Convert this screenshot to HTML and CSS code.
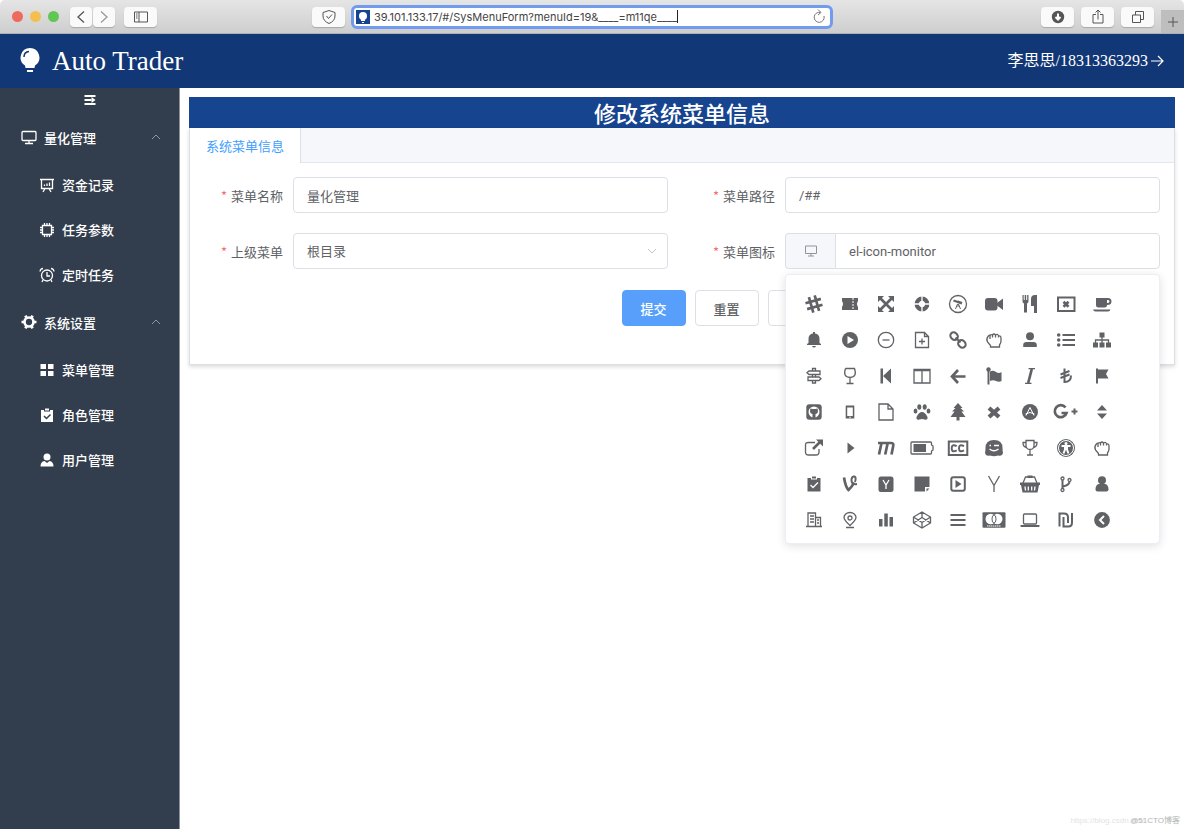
FILE: index.html
```html
<!DOCTYPE html>
<html lang="zh-CN">
<head>
<meta charset="utf-8">
<title>Auto Trader</title>
<meta name="viewport" content="width=device-width, initial-scale=1">
<link rel="stylesheet" href="styles.css">
</head>
<body>
<div class="window">
  <div class="toolbar">
    <div class="tool-left">
      <div class="lights"><span class="light red"></span><span class="light amber"></span><span class="light green"></span></div>
      <div class="nav-pair">
        <button class="tool nav" aria-label="后退"><svg class="ico" viewBox="-12 -12 24 24"><path class="ln w15" d="M3-5.500-3 0 3 5.500"/></svg></button>
        <button class="tool nav dim" aria-label="前进"><svg class="ico" viewBox="-12 -12 24 24"><path class="ln w15" d="M-3-5.500 3 0-3 5.500"/></svg></button>
      </div>
      <button class="tool" aria-label="边栏"><svg class="ico" viewBox="-12 -12 24 24"><path class="ln" d="M-6.500-5h13V5h-13zM-2-5V5M-5-3h1.500M-5-1h1.500M-5 1h1.500"/></svg></button>
    </div>
    <div class="tool-center">
      <button class="tool" aria-label="隐私报告"><svg class="ico" viewBox="-12 -12 24 24"><path class="ln" d="M0-6.500 6-4.500V-1Q6 4 0 6.500-6 4-6-1V-4.500zM-2.500-1-.5 1.500 3-2.500"/></svg></button>
      <div class="address">
        <span class="favicon"><svg class="ico" viewBox="-12 -12 24 24"><circle cy="-1" r="4"/><path d="M-2 2h4v2h-4zM-1 5h2v1h-2z"/></svg></span>
        <input class="address-input" aria-label="地址" value="39.101.133.17/#/SysMenuForm?menuId=19&amp;____=m11qe____">
        <span class="caret"></span>
        <button class="reload" aria-label="重新载入"><svg class="ico" viewBox="-12 -12 24 24"><path class="ln" d="M5-1A5 5 0 1 1 1.500-4.500M-1-7.500 2-4.500-1-2"/></svg></button>
      </div>
    </div>
    <div class="tool-right">
      <button class="tool" aria-label="下载"><svg class="ico" viewBox="-12 -12 24 24"><circle r="6.200"/><path class="cut w2" d="M0-3.500V2M-2.500 0 0 2.500 2.500 0"/></svg></button>
      <button class="tool" aria-label="共享"><svg class="ico" viewBox="-12 -12 24 24"><path class="ln" d="M-2-2.500H-5V6H5V-2.500H2M0 2.500V-7M-2.500-4.500 0-7 2.500-4.500"/></svg></button>
      <button class="tool" aria-label="标签页"><svg class="ico" viewBox="-12 -12 24 24"><path class="ln" d="M-5.500-2h8v7.500h-8zM-2.500-2v-3.500h8V2.500H2.500"/></svg></button>
      <button class="new-tab" aria-label="新标签页"><svg class="ico" viewBox="-12 -12 24 24"><path class="ln" d="M-5 0H5M0-5V5"/></svg></button>
    </div>
  </div>

  <header class="app-header">
    <div class="brand">
      <svg class="bulb" viewBox="0 0 20 26"><path d="M10 0a9.500 9.500 0 0 1 5 17.500L14.500 20h-9L5 17.500A9.500 9.500 0 0 1 10 0zM7 22h6v2h-6z"/><path class="bulb-shine" d="M4 9Q4 4 9 3.500"/></svg>
      <span class="brand-name">Auto Trader</span>
    </div>
    <a class="account" href="#">李思思/18313363293<svg class="account-arrow" viewBox="0 0 14 14"><path d="M1 7h12M8 2l5 5-5 5"/></svg></a>
  </header>

  <div class="body">
    <nav class="sidebar">
      <button class="collapse" aria-label="收起菜单"><svg class="ico" viewBox="-12 -12 24 24"><path class="ln w2" d="M-5.500-4h11M-5.500 0h7M-5.500 4h11"/><path d="M1.500-3 5.500 0 1.500 3z"/></svg></button>
      <button class="group"><svg class="ico" viewBox="-12 -12 24 24"><path class="ln w15" d="M-6-5.500H6Q7-5.500 7-4.500V2.500Q7 3.500 6 3.500H-6Q-7 3.500-7 2.500V-4.500Q-7-5.500-6-5.500M0 3.500V6.500M-4 6.500H4"/></svg>量化管理<svg class="chevron" viewBox="0 0 10 6"><path d="M1 5l4-4 4 4"/></svg></button>
      <a class="item" href="#"><svg class="ico" viewBox="-12 -12 24 24"><path class="ln w15" d="M-7-5.500H7M-5.500-5.500V3.500H5.500V-5.500M-2 3.500-4 7M2 3.500 4 7M-2.500 1V-.5M0 1V-1.500M2.500 1V-2.500"/></svg>资金记录</a>
      <a class="item" href="#"><svg class="ico" viewBox="-12 -12 24 24"><path class="ln w15" d="M-4.500-4.500h9v9h-9zM-2.500-7v2M0-7v2M2.500-7v2M-2.500 5v2M0 5v2M2.500 5v2M-7-2.500h2M-7 0h2M-7 2.500h2M5-2.500h2M5 0h2M5 2.500h2"/></svg>任务参数</a>
      <a class="item" href="#"><svg class="ico" viewBox="-12 -12 24 24"><circle class="ln w15" cy=".5" r="5.500"/><path class="ln w15" d="M0-3V1H3M-4-6.500Q-6.500-6.500-7-3.500M4-6.500Q6.500-6.500 7-3.500M-4 5-5 7M4 5 5 7"/></svg>定时任务</a>
      <button class="group"><svg class="ico" viewBox="-12 -12 24 24"><circle class="ln w3" r="4.500"/><path class="ln w3" d="M5 0H7.500M-5 0H-7.500M2.500-4.300 3.600-6.300M-2.500-4.300-3.600-6.300M2.500 4.300 3.600 6.300M-2.500 4.300-3.600 6.300"/></svg>系统设置<svg class="chevron" viewBox="0 0 10 6"><path d="M1 5l4-4 4 4"/></svg></button>
      <a class="item" href="#"><svg class="ico" viewBox="-12 -12 24 24"><path d="M-6.500-6h5.500v5h-5.500zM1-6h5.500v5h-5.500zM-6.500 1h5.500v5h-5.500zM1 1h5.500v5h-5.500z"/></svg>菜单管理</a>
      <a class="item" href="#"><svg class="ico" viewBox="-12 -12 24 24"><path d="M-6-5h3v1.500h6V-5h3V7H-6zM-2-6.500h4v2h-4z"/><path class="side-cut" d="M-3 1-.5 3.500 3.500-.5"/></svg>角色管理</a>
      <a class="item" href="#"><svg class="ico" viewBox="-12 -12 24 24"><circle cy="-3" r="3.500"/><path d="M-6.500 6.500Q-6.500 1.500-2.500 1L0 3 2.500 1Q6.500 1.500 6.500 6.500z"/></svg>用户管理</a>
    </nav>

    <main class="main">
      <section class="card">
        <h1 class="title">修改系统菜单信息</h1>
        <div class="panel">
          <div class="tabs" role="tablist"><button class="tab" role="tab" aria-selected="true">系统菜单信息</button></div>
          <form class="form">
            <div class="field"><label class="label" for="name">菜单名称</label><input class="input" id="name" value="量化管理"></div>
            <div class="field"><label class="label" for="path">菜单路径</label><input class="input" id="path" value="/##"></div>
            <div class="field"><label class="label" for="parent">上级菜单</label>
              <div class="select-wrap"><select class="input" id="parent"><option>根目录</option></select><svg class="select-arrow" viewBox="0 0 10 6"><path d="M1 1l4 4 4-4"/></svg></div>
            </div>
            <div class="field"><label class="label" for="icon">菜单图标</label>
              <div class="icon-picker">
                <span class="prepend"><svg class="ico" viewBox="-12 -12 24 24"><path class="ln" d="M-5.500-5h11v7.500h-11zM0 2.500V5M-3 5H3"/></svg></span>
                <input class="input joined" id="icon" value="el-icon-monitor">
                <div class="popover">
                  <button type="button" class="pick" aria-label="slack"><svg class="ico" viewBox="-12 -12 24 24"><path class="ln w3" transform="rotate(-16)" d="M-3-8V8M3-8V8M-8-3H8M-8 3H8"/></svg></button>
                  <button type="button" class="pick" aria-label="ticket"><svg class="ico" viewBox="-12 -12 24 24"><path d="M-8-6H8V-3Q6 0 8 3V6H-8V3Q-6 0-8-3z"/><path class="cut dash" d="M3-6V6"/></svg></button>
                  <button type="button" class="pick" aria-label="expand"><svg class="ico" viewBox="-12 -12 24 24"><path class="ln w3" d="M-6-6 6 6M6-6-6 6"/><path d="M-8-8h6l-6 6zM8-8v6l-6-6zM8 8H2l6-6zM-8 8V2l6 6z"/></svg></button>
                  <button type="button" class="pick" aria-label="help"><svg class="ico" viewBox="-12 -12 24 24"><circle class="ln w4" r="5.300"/><path class="cut w15" d="M0-8V8M-8 0H8"/></svg></button>
                  <button type="button" class="pick" aria-label="discover"><svg class="ico" viewBox="-12 -12 24 24"><circle class="ln w15" r="8.500"/><path class="ln w2" d="M-4.500-3.500 0-2"/><path class="ln w3" d="M-.5-2.200 4-.7"/><path class="ln" d="M-.5 0-2.500 5M.5 0 2.500 5M0 0V3"/></svg></button>
                  <button type="button" class="pick" aria-label="video"><svg class="ico" viewBox="-12 -12 24 24"><rect x="-9" y="-6" width="12.500" height="12.500" rx="3"/><path d="M3-1 9-5.500V6L3 1.500z"/></svg></button>
                  <button type="button" class="pick" aria-label="cutlery"><svg class="ico" viewBox="-12 -12 24 24"><path d="M-7.500-9h1.200v5h1V-9h1.500v5h1V-9h1.300V-3Q-1.500-1-3-.5V8.500h-3V-.5Q-7.500-1-7.500-3zM1-5Q1-9 5-9h2V9H4V2H1z"/></svg></button>
                  <button type="button" class="pick" aria-label="window close"><svg class="ico" viewBox="-12 -12 24 24"><rect class="ln w2" x="-8" y="-6.500" width="16.500" height="13.500"/><path class="ln w3" d="M-2.500-2.300 2.500 2.700M2.500-2.300-2.500 2.700"/></svg></button>
                  <button type="button" class="pick" aria-label="cup"><svg class="ico" viewBox="-12 -12 24 24"><path d="M-6-6H5V1Q5 3.500 2.500 3.500H-3.500Q-6 3.500-6 1zM-9 5.500H8.500Q8 7.500 6 7.500H-6.500Q-8.500 7.500-9 5.500z"/><path class="ln w2" d="M5-5H6Q8.500-5 8.500-2.500T5 0"/></svg></button>

                  <button type="button" class="pick" aria-label="bell"><svg class="ico" viewBox="-12 -12 24 24"><path d="M-1-8h2v1.500Q5.500-6 5.500-1V3L7 4V5H-7V4L-5.500 3V-1Q-5.500-6-1-6.500zM-2 6h4Q1.500 7.500 0 7.500T-2 6z"/></svg></button>
                  <button type="button" class="pick" aria-label="play"><svg class="ico" viewBox="-12 -12 24 24"><circle r="8"/><path class="hole" d="M-2.500-4 4 0-2.500 4z"/></svg></button>
                  <button type="button" class="pick" aria-label="remove"><svg class="ico" viewBox="-12 -12 24 24"><circle class="ln w15" r="7.700"/><path class="ln w15" d="M-3.500 0H3.500"/></svg></button>
                  <button type="button" class="pick" aria-label="add document"><svg class="ico" viewBox="-12 -12 24 24"><path class="ln w15" d="M-6.500-7.500H2.500L6.500-3.500V7.500H-6.500zM2.500-7.500V-3.500H6.500"/><path class="ln w15" d="M-3 1.500H3M0-1.500V4.500"/></svg></button>
                  <button type="button" class="pick" aria-label="link"><svg class="ico" viewBox="-12 -12 24 24"><g class="ln w2" transform="rotate(45)"><rect x="-9.500" y="-3.300" width="8" height="6.600" rx="3.300"/><rect x="1.500" y="-3.300" width="8" height="6.600" rx="3.300"/><path d="M-3.500 0h7"/></g></svg></button>
                  <button type="button" class="pick" aria-label="fist"><svg class="ico" viewBox="-12 -12 24 24"><path class="ln w15" d="M-4-4Q-3.500-6-1.500-5Q0-7 1.500-5Q4-6.500 4.500-4Q7-4.500 7-2V1Q7 3 5.500 5V7H-3.500V5.500L-6.500 2Q-8-1-6-3.500T-4-4V-1M-1.500-5V-2.500M1.500-5V-2.500M4.500-4V-2.500"/></svg></button>
                  <button type="button" class="pick" aria-label="user"><svg class="ico" viewBox="-12 -12 24 24"><circle cy="-3.700" r="4"/><path d="M-6.800 7V5Q-6.800 2-3.500 2h7Q6.800 2 6.800 5V7z"/></svg></button>
                  <button type="button" class="pick" aria-label="list"><svg class="ico" viewBox="-12 -12 24 24"><circle cx="-7.300" cy="-5" r="1.800"/><circle cx="-7.300" r="1.800"/><circle cx="-7.300" cy="5" r="1.800"/><path class="ln w2" d="M-3.500-5H9M-3.500 0H9M-3.500 5H9"/></svg></button>
                  <button type="button" class="pick" aria-label="sitemap"><svg class="ico" viewBox="-12 -12 24 24"><path d="M-2.500-7.500h5v5h-5zM-9 2.500h5v5h-5zM-2.500 2.500h5v5h-5zM4 2.500h5v5H4z"/><path class="ln w15" d="M0-3V3M-6.500 3V0h13V3"/></svg></button>

                  <button type="button" class="pick" aria-label="signpost"><svg class="ico" viewBox="-12 -12 24 24"><path class="ln w15" d="M-1.500-5V-7.500h3V-5M-5-5H6V-1.500H-5L-7-3.200zM-1.500-1.500V1M1.500-1.500V1M-6 1H5L7 2.700 5 4.500H-6zM-1.500 4.500V7h3V4.500"/></svg></button>
                  <button type="button" class="pick" aria-label="goblet"><svg class="ico" viewBox="-12 -12 24 24"><path class="ln w15" d="M-4.500-7.500H4.500Q7.500 1 0 1.500-7.500 1-4.500-7.500M0 1.500V7.500M-3.500 7.500H3.500"/></svg></button>
                  <button type="button" class="pick" aria-label="step back"><svg class="ico" viewBox="-12 -12 24 24"><path d="M-5.500-7.500h2.500v15h-2.500zM-3 0 5-7.500v15z"/></svg></button>
                  <button type="button" class="pick" aria-label="columns"><svg class="ico" viewBox="-12 -12 24 24"><path class="ln w15" d="M-8-6.500H8V7H-8zM0-6.500V7M-8-5.500H8"/></svg></button>
                  <button type="button" class="pick" aria-label="left"><svg class="ico" viewBox="-12 -12 24 24"><path class="ln w3" d="M7.500.5H-5M0-6-6 .5 0 7"/></svg></button>
                  <button type="button" class="pick" aria-label="flag"><svg class="ico" viewBox="-12 -12 24 24"><circle cx="-5.500" cy="-6.500" r="2.200"/><path d="M-6.500-6h2V8.500h-2zM-4-4.500Q-1-6 2-4T7.500-4V5Q5 6.500 2 5T-4 5z"/></svg></button>
                  <button type="button" class="pick" aria-label="italic"><svg class="ico" viewBox="-12 -12 24 24"><path class="ln w3" d="M1.800-7-1.800 7"/><path class="ln w15" d="M-1.500-7.300H5M-5 7.300H1.500"/></svg></button>
                  <button type="button" class="pick" aria-label="lira"><svg class="ico" viewBox="-12 -12 24 24"><path class="ln w2" d="M-1.500-7.500V6Q5 6 5-.5M-5.500-1.500 3.500-5M-5.500 2 3.500-1.500"/></svg></button>
                  <button type="button" class="pick" aria-label="banner"><svg class="ico" viewBox="-12 -12 24 24"><path d="M-6-7.500h2v15h-2zM-4-6.500H6.500L4-2 6.500 2.500H-4z"/></svg></button>

                  <button type="button" class="pick" aria-label="github"><svg class="ico" viewBox="-12 -12 24 24"><rect x="-7.700" y="-7.700" width="15.400" height="15.400" rx="3"/><circle class="hole" r="5.500"/><path d="M-3.700-3.500-1.500-3H1.500L3.700-3.500Q4.500 0 3 1.500L1.500 2V6H-1.500V2L-3 1.500Q-4.500 0-3.700-3.500z"/></svg></button>
                  <button type="button" class="pick" aria-label="phone"><svg class="ico" viewBox="-12 -12 24 24"><path d="M-4.300-6.500h8.600v13h-8.600zM-2.800-4.500V4h5.600V-4.500z" fill-rule="evenodd"/><circle class="hole" cy="5.300" r=".7"/></svg></button>
                  <button type="button" class="pick" aria-label="document"><svg class="ico" viewBox="-12 -12 24 24"><path class="ln w15" d="M-7-8H2L7-3V8H-7zM2-8V-3H7"/></svg></button>
                  <button type="button" class="pick" aria-label="paw"><svg class="ico" viewBox="-12 -12 24 24"><ellipse cx="-6.500" cy="-1" rx="1.900" ry="2.600"/><ellipse cx="6.500" cy="-1" rx="1.900" ry="2.600"/><ellipse cx="-2.700" cy="-5" rx="2" ry="2.800"/><ellipse cx="2.700" cy="-5" rx="2" ry="2.800"/><path d="M0 0Q3 0 5.500 5 6 8.500 2.500 7.500 0 6.500-2.500 7.500-6 8.500-5.500 5-3 0 0 0z"/></svg></button>
                  <button type="button" class="pick" aria-label="tree"><svg class="ico" viewBox="-12 -12 24 24"><path d="M0-9 4.500-4H2.500L6-.5H3.500L7.500 5H1.500V8.500h-3V5h-6L-3.500-.5H-6L-2.500-4h-2z"/></svg></button>
                  <button type="button" class="pick" aria-label="close"><svg class="ico" viewBox="-12 -12 24 24"><path class="ln w4" d="M-5-4 5 5M5-4-5 5"/></svg></button>
                  <button type="button" class="pick" aria-label="app"><svg class="ico" viewBox="-12 -12 24 24"><circle r="8"/><path class="cut" d="M-4 3.500 0-4.500 4 3.500M-4.500 2Q0-1 4.500 2"/></svg></button>
                  <button type="button" class="pick" aria-label="google plus"><svg class="ico" viewBox="-12 -12 24 24"><path class="ln w3" d="M-.5-4.500A6 6 0 1 0 .5 1H-4.500"/><path class="ln w2" d="M8.500-3.500V2.500M5.500-.5H11.500"/></svg></button>
                  <button type="button" class="pick" aria-label="sort"><svg class="ico" viewBox="-12 -12 24 24"><path d="M-5-1.500 0-7 5-1.500zM-5 1.500 0 7 5 1.500z"/></svg></button>

                  <button type="button" class="pick" aria-label="external"><svg class="ico" viewBox="-12 -12 24 24"><path class="ln w15" d="M1-5.500H-5.500Q-8.500-5.500-8.500-3V4Q-8.500 7-5.500 7H2Q5 7 5 4V1"/><path class="ln w3" d="M-1 1 6-6"/><path d="M2-8.500H9V-1.500z"/></svg></button>
                  <button type="button" class="pick" aria-label="caret"><svg class="ico" viewBox="-12 -12 24 24"><path d="M-2.500-5.500 4.500 0-2.500 5.500z"/></svg></button>
                  <button type="button" class="pick" aria-label="maxcdn"><svg class="ico" viewBox="-12 -12 24 24"><path class="ln w3" d="M-8-5H5Q8-5 7.200-2L5.500 6.500M-4.500-5-7 6.500M1.700-5-.8 6.500"/></svg></button>
                  <button type="button" class="pick" aria-label="battery"><svg class="ico" viewBox="-12 -12 24 24"><path class="ln w15" d="M-10-6H8.500Q9.500-6 9.500-5V-3L11-2V2L9.500 3V5Q9.500 6 8.500 6H-10Q-11 6-11 5V-5Q-11-6-10-6"/><path d="M-8.500-4H4V4H-8.500z"/></svg></button>
                  <button type="button" class="pick" aria-label="captions"><svg class="ico" viewBox="-12 -12 24 24"><rect class="ln w2" x="-9.200" y="-6.500" width="18.500" height="13.500"/><path class="ln w2" d="M-1.300-1.800Q-6.300-4.500-6.300.3T-1.300 2.300M6-1.800Q1-4.500 1 .3T6 2.300"/></svg></button>
                  <button type="button" class="pick" aria-label="wpbeginner"><svg class="ico" viewBox="-12 -12 24 24"><path d="M0-8Q8.500-8 8.500 0 8.500 3 9 4.500 8.500 8.500 4 7.500 0 9-4 7.500-8.500 8.500-9 4.500-8.500 3-8.500 0-8.500-8 0-8z"/><path class="cut w15" d="M-4.500-2.500H-3M0-2.500H5M-4.500 1Q0 4.500 4.500 1"/></svg></button>
                  <button type="button" class="pick" aria-label="trophy"><svg class="ico" viewBox="-12 -12 24 24"><path class="ln w15" d="M-4-7.500H4V-2Q3.500 1.500 0 1.500T-4-2zM-4-5.500H-7Q-7-1-3.500-.5M4-5.500H7Q7-1 3.500-.5M0 1.500V7M-3 7H3"/></svg></button>
                  <button type="button" class="pick" aria-label="accessibility"><svg class="ico" viewBox="-12 -12 24 24"><circle r="9"/><circle class="cut" r="7.500"/><circle class="hole" cy="-4.500" r="1.500"/><path class="cut w2" d="M-4.500-2H4.500M0-2V1.500M-1-1V1.500L-2.500 5.500M1-1V1.500L2.500 5.500"/></svg></button>
                  <button type="button" class="pick" aria-label="grab"><svg class="ico" viewBox="-12 -12 24 24"><path class="ln w15" d="M-4-4Q-3.500-6-1.500-5Q0-7 1.500-5Q4-6.500 4.500-4Q7-4.500 7-2V1Q7 3 5.500 5V7H-3.500V5.500L-6.500 2Q-8-1-6-3.500T-4-4V-1M-1.500-5V-2.500M1.500-5V-2.500M4.500-4V-2.500"/></svg></button>

                  <button type="button" class="pick" aria-label="claim"><svg class="ico" viewBox="-12 -12 24 24"><path d="M-6.500-6h3.500v1.500h6V-6h3.500V7.500h-13zM-2-7.500h4v2h-4z"/><path class="cut w15" d="M-3.500 1-1 3.500 4-1.500"/></svg></button>
                  <button type="button" class="pick" aria-label="vine"><svg class="ico" viewBox="-12 -12 24 24"><path class="ln w3" d="M-6-6.500Q-4.500 3-1.500 6 2 3 4-1.500"/><path class="ln w2" d="M7 0Q1 1 1.500-4.500 2-8 4.500-7.500 6.500-6.500 5-2"/></svg></button>
                  <button type="button" class="pick" aria-label="hacker news"><svg class="ico" viewBox="-12 -12 24 24"><rect x="-7.500" y="-7.500" width="15" height="15.500" rx="2.500"/><path class="cut w15" d="M-3-4 0 1 3-4M0 1V5"/></svg></button>
                  <button type="button" class="pick" aria-label="note"><svg class="ico" viewBox="-12 -12 24 24"><path d="M-7.500-7.500h15V3H3V7.500H-7.500zM4.500 4.500h3L4.500 7.500z"/></svg></button>
                  <button type="button" class="pick" aria-label="youtube"><svg class="ico" viewBox="-12 -12 24 24"><rect class="ln w2" x="-6.700" y="-6.700" width="13.500" height="13.500" rx="2"/><path d="M-2.500-4 3.500 0-2.500 4z"/></svg></button>
                  <button type="button" class="pick" aria-label="y combinator"><svg class="ico" viewBox="-12 -12 24 24"><path class="ln w15" d="M-5.500-8 0 1.500 5.500-8M0 1V8"/></svg></button>
                  <button type="button" class="pick" aria-label="basket"><svg class="ico" viewBox="-12 -12 24 24"><path class="ln w15" d="M-7-1-4.500-7H4.500L7-1"/><path d="M-2.500-8.500h5v2.500h-5zM-10-1.500H10V1H9L7.500 8.500h-15L-9 1h-1z"/><path class="cut w15" d="M-5 2.500-4.500 6.500M-1.700 2.500V6.500M1.700 2.500V6.500M5 2.500 4.500 6.500"/></svg></button>
                  <button type="button" class="pick" aria-label="branch"><svg class="ico" viewBox="-12 -12 24 24"><circle class="ln w15" cx="-3.500" cy="-5.500" r="1.500"/><circle class="ln w15" cx="-3.500" cy="6" r="1.500"/><circle class="ln w15" cx="3.500" cy="-4" r="1.500"/><path class="ln w2" d="M-3.500-4V4.500M3.500-2.500Q3.500 1-3 2.500"/></svg></button>
                  <button type="button" class="pick" aria-label="person"><svg class="ico" viewBox="-12 -12 24 24"><circle cy="-3.700" r="4"/><path d="M-3.500 0h7Q6.500 1 6.500 5.500 6.500 7.500 4.500 7.500h-9Q-6.500 7.500-6.500 5.500-6.500 1-3.500 0z"/></svg></button>

                  <button type="button" class="pick" aria-label="office"><svg class="ico" viewBox="-12 -12 24 24"><path class="ln w15" d="M-6 6.500V-7H1.500V6.500M1.500-2.500H6.500V6.500M-8 6.500H8M-4-4H0M-4-1H0M-4 2H0M3 0H5M3 3H5"/></svg></button>
                  <button type="button" class="pick" aria-label="location"><svg class="ico" viewBox="-12 -12 24 24"><path class="ln w15" d="M0 5.500Q-6 0-6-2.500A6 5 0 0 1 6-2.500Q6 0 0 5.500zM-4 7.500H4"/><circle class="ln w15" cy="-2" r="2"/></svg></button>
                  <button type="button" class="pick" aria-label="data"><svg class="ico" viewBox="-12 -12 24 24"><path d="M-7-1h3.500v7.500H-7zM-1.700-6.500h3.500v13h-3.500zM3.500-3H7v9.500H3.500z"/></svg></button>
                  <button type="button" class="pick" aria-label="codepen"><svg class="ico" viewBox="-12 -12 24 24"><path class="ln w15" d="M0-8 8.500-3V3L0 8-8.500 3V-3zM0-8V-2.500M0 8V2.500M-8.500-3 0 2.500 8.500-3M-8.500 3 0-2.500 8.500 3"/></svg></button>
                  <button type="button" class="pick" aria-label="menu"><svg class="ico" viewBox="-12 -12 24 24"><path class="ln w2" d="M-7.500-5H7.500M-7.500 0H7.500M-7.500 5H7.500"/></svg></button>
                  <button type="button" class="pick" aria-label="mastercard"><svg class="ico" viewBox="-12 -12 24 24"><rect x="-11.500" y="-7.700" width="23" height="15.500" rx="1"/><circle class="hole" cx="-3.300" cy="-1" r="5.200"/><circle class="hole" cx="3.300" cy="-1" r="5.200"/><ellipse class="ln" cy="-1" rx="2" ry="4"/><path class="cut dash-fine" d="M-7 6H7"/></svg></button>
                  <button type="button" class="pick" aria-label="laptop"><svg class="ico" viewBox="-12 -12 24 24"><rect class="ln w15" x="-6.500" y="-6" width="13" height="10" rx="1"/><path d="M-9.500 5h19v1.500Q9 7 8 7H-8Q-9 7-9.500 6.500z"/></svg></button>
                  <button type="button" class="pick" aria-label="shekel"><svg class="ico" viewBox="-12 -12 24 24"><path class="ln w2" d="M-6.500 6.500V-6.500H-2Q2-6.500 2-2.500V3M-2.500-3V6.500H2.500Q6 6.500 6 2.500V-7"/></svg></button>
                  <button type="button" class="pick" aria-label="previous"><svg class="ico" viewBox="-12 -12 24 24"><circle r="7.900"/><path class="cut w2" d="M2-4-2 0 2 4"/></svg></button>
                </div>
              </div>
            </div>
            <div class="actions">
              <button type="button" class="btn primary">提交</button>
              <button type="button" class="btn">重置</button>
              <button type="button" class="btn" aria-label="返回"></button>
            </div>
          </form>
        </div>
      </section>
    </main>
  </div>
  <div class="watermark"><span class="mark-url">https://blog.csdn.net/</span><span class="mark-site">@51CTO博客</span></div>
</div>
</body>
</html>
```
FILE: styles.css
```css
* { box-sizing: border-box; }
body { margin: 0; background: #fff; font-family: "Noto Sans CJK SC", sans-serif; font-size: 13px; color: #606266; }
button, input, select { font: inherit; color: inherit; margin: 0; }
button { background: none; border: 0; padding: 0; }
a { color: inherit; text-decoration: none; }

.window { position: relative; display: flex; flex-direction: column; min-height: 100vh; border-radius: 5px 5px 0 0; overflow: hidden; }

.ico { display: block; flex: none; width: 24px; height: 24px; fill: currentColor; overflow: visible; }
.ln { fill: none; stroke: currentColor; stroke-width: 1px; }
.cut { fill: none; stroke: #fff; stroke-width: 1px; }
.hole { fill: #fff; }
.side-cut { fill: none; stroke: #323d4d; stroke-width: 1.5px; }
.w15 { stroke-width: 1.3px; }
.w2 { stroke-width: 2px; }
.w3 { stroke-width: 2.7px; }
.w4 { stroke-width: 4.2px; }
.dash { stroke-dasharray: 2 1; }
.dash-fine { stroke-dasharray: 1.5 .5; }

/* browser toolbar */
.toolbar { display: grid; grid-template-columns: 312fr 521fr 351fr; height: 34px; background: linear-gradient(#e6e5e6, #cfcecf); border-bottom: 1px solid #b0b0b0; color: #555; }
.tool-left, .tool-center, .tool-right { display: flex; align-items: center; min-width: 0; }
.tool-left { padding-left: 12px; }
.lights { display: flex; gap: 7px; margin-right: 11px; }
.light { width: 11px; height: 11px; border-radius: 50%; }
.red { background: #ed6a5f; }
.amber { background: #f5bf50; }
.green { background: #62c655; }
.nav-pair { display: flex; gap: 1px; margin-right: 9px; }
.tool { display: flex; align-items: center; justify-content: center; flex: none; width: 33px; height: 20px; background: #fafafa; border-radius: 4px; box-shadow: 0 1px 1px rgba(0, 0, 0, .2); }
.tool.nav { width: 22px; }
.dim { color: #999; }
.tool-center { gap: 6px; }
.address { display: flex; align-items: center; flex: 1; min-width: 0; height: 24px; padding: 0 2px; background: #fff; border: 3px solid #719ced; border-radius: 6px; }
.favicon { display: flex; align-items: center; justify-content: center; width: 14px; height: 14px; background: #17448f; color: #fff; overflow: hidden; }
.address-input { flex: 0 1 auto; field-sizing: content; min-width: 0; height: 18px; padding: 0 0 0 4px; border: 0; outline: 0; background: none; font-family: Inter, "Liberation Sans", sans-serif; font-size: 11px; color: #444; }
.caret { width: 1px; height: 13px; background: #222; }
.reload { width: 18px; margin-left: auto; display: flex; justify-content: center; color: #777; }
.tool-right { justify-content: flex-end; gap: 7px; }
.new-tab { display: flex; align-items: center; justify-content: center; align-self: flex-end; width: 23px; height: 23px; background: #bfbebf; }

/* application header */
.app-header { display: flex; align-items: center; justify-content: space-between; height: 54px; padding: 0 20px; background: #113776; color: #fff; font-family: "Liberation Serif", "Noto Sans CJK SC", serif; }
.brand { display: flex; align-items: center; gap: 12px; }
.bulb { width: 20px; height: 26px; fill: #fff; }
.bulb-shine { fill: none; stroke: #113776; stroke-width: 1.5px; }
.brand-name { font-size: 27px; }
.account { display: flex; align-items: center; gap: 2px; font-size: 16px; line-height: 20px; }
.account-arrow { width: 14px; height: 14px; fill: none; stroke: #fff; stroke-width: 1.2px; }

.body { display: flex; flex: 1; }
.sidebar { display: flex; flex-direction: column; flex: none; width: 180px; background: #323d4d; border-right: 1px solid #8a919b; color: #fff; font-weight: 500; }
.collapse { display: flex; align-items: center; justify-content: center; height: 24px; }
.group, .item { display: flex; align-items: center; }
.group { height: 50px; padding: 0 18px 0 17px; gap: 3px; font-weight: 500; }
.item { height: 45px; padding-left: 35px; gap: 3px; }
.chevron { width: 10px; height: 6px; margin-left: auto; fill: none; stroke: #8d96a2; }

.main { flex: 1; min-width: 0; padding: 9px; }
.title { margin: 0; background: #17448f; color: #fff; font-size: 22px; line-height: 31px; font-weight: 500; text-align: center; }
.panel { border: 1px solid #dcdfe6; border-top: 0; box-shadow: 0 2px 4px rgba(0, 0, 0, .14); }
.tabs { display: flex; height: 35px; background: #f5f7fa; border-bottom: 1px solid #e4e7ed; }
.tab { height: 35px; padding: 0 16px; background: #fff; border-right: 1px solid #dcdfe6; color: #409eff; }
.form { display: grid; grid-template-columns: 1fr 1fr; row-gap: 21px; padding: 14px 0 38px; }
.field { display: flex; align-items: center; height: 36px; padding-right: 14px; }
.field:nth-child(n+3) { margin-top: -1px; }
.label { flex: none; width: 103px; padding-right: 10px; text-align: right; }
.label::before { content: "*"; margin-right: 4px; color: #f56c6c; }
.input { flex: 1; min-width: 0; width: 100%; height: 36px; padding: 0 13px; background: #fff; border: 1px solid #dcdfe6; border-radius: 4px; outline: 0; font-family: Roboto, "Noto Sans CJK SC", sans-serif; font-size: 13px; appearance: none; }
.select-wrap { position: relative; flex: 1; }
.select-arrow { position: absolute; right: 11px; top: 15px; width: 10px; height: 6px; fill: none; stroke: #c0c4cc; pointer-events: none; }
.icon-picker { position: relative; display: flex; flex: 1; min-width: 0; }
.prepend { display: flex; align-items: center; justify-content: center; width: 50px; background: #f5f7fa; border: 1px solid #dcdfe6; border-right: 0; border-radius: 4px 0 0 4px; color: #909399; }
.joined { border-radius: 0 4px 4px 0; }
.popover { position: absolute; z-index: 2; top: 41px; left: 0; right: 0; display: grid; grid-template-columns: repeat(auto-fill, 36px); padding: 11px 30px 5px 10px; background: #fff; border: 1px solid #ebeef5; border-radius: 4px; box-shadow: 0 2px 10px rgba(0, 0, 0, .12); }
.pick { display: flex; align-items: center; justify-content: center; height: 36px; }
.actions { grid-column: 1 / -1; display: flex; justify-content: center; gap: 9px; padding: 0 14px 0 103px; }
.btn { width: 64px; height: 36px; background: #fff; border: 1px solid #dcdfe6; border-radius: 4px; font-weight: 500; }
.primary { background: #579ffb; border-color: #579ffb; color: #fff; }

.watermark { position: absolute; right: 4px; bottom: 2px; display: flex; font-family: "Liberation Sans", "Noto Sans CJK SC", sans-serif; font-size: 8px; line-height: 12px; }
.mark-url { margin-right: -14px; color: #e4e4e4; }
.mark-site { color: #b4b4b4; }
```
